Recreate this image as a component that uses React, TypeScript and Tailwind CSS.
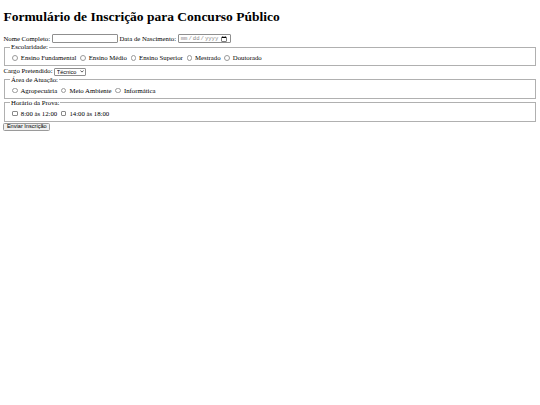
import { useState } from "react";

const escolaridades = ["Ensino Fundamental", "Ensino Médio", "Ensino Superior", "Mestrado", "Doutorado"];
const areas = ["Agropecuária", "Meio Ambiente", "Informática"];
const horarios = ["8:00 às 12:00", "14:00 às 18:00"];

export default function App() {
  const [cargo, setCargo] = useState("tecnico");

  return (
    <div className="min-h-screen bg-white px-[3.4px] text-[6.75px] leading-[1.15] text-black font-['Liberation_Serif','Times_New_Roman',serif]">
      <h1 className="pt-[9px] mb-[9px] text-[13.5px] font-bold leading-[1.15]">
        Formulário de Inscrição para Concurso Público
      </h1>

      <form onSubmit={(e) => e.preventDefault()}>
        <div className="leading-[9.5px]">
          <label htmlFor="nome">Nome Completo:</label>{" "}
          <input
            id="nome"
            type="text"
            className="w-[66px] h-[9px] align-middle border border-[#8f8f8f] rounded-[1px] bg-white px-[1px] text-[5.6px]"
          />{" "}
          <label htmlFor="nasc">Data de Nascimento:</label>{" "}
          <input
            id="nasc"
            type="date"
            className="w-[53px] h-[9px] align-middle border border-[#8f8f8f] rounded-[1px] bg-white px-[1px] text-[5.6px] text-[#8a8a8a] font-['Liberation_Mono',monospace]"
          />
        </div>

        <Group legend="Escolaridade:">
          {escolaridades.map((e) => (
            <Choice key={e} name="escolaridade" label={e} type="radio" />
          ))}
        </Group>

        <div className="leading-[9px]">
          <label htmlFor="cargo">Cargo Pretendido:</label>{" "}
          <span className="relative inline-block align-middle">
            <select
              id="cargo"
              value={cargo}
              onChange={(e) => setCargo(e.target.value)}
              className="appearance-none block h-[8px] pl-[1.5px] pr-[8px] leading-[6px] border border-[#8f8f8f] rounded-[1px] bg-white text-[5.6px] font-['Liberation_Sans',Arial,sans-serif]"
            >
              <option value="tecnico">Técnico</option>
              <option value="analista">Analista</option>
            </select>
            <svg
              viewBox="0 0 10 6"
              className="pointer-events-none absolute right-[1.5px] top-[2.6px] w-[4px] h-[2.6px]"
            >
              <path d="M1 1l4 4 4-4" fill="none" stroke="#222" strokeWidth="1.8" />
            </svg>
          </span>
        </div>

        <Group legend="Área de Atuação:">
          {areas.map((a) => (
            <Choice key={a} name="area" label={a} type="radio" />
          ))}
        </Group>

        <Group legend="Horário da Prova:">
          {horarios.map((h) => (
            <Choice key={h} name="horario" label={h} type="checkbox" />
          ))}
        </Group>

        <button
          type="submit"
          className="mt-[0.5px] h-[8px] px-[2.5px] leading-none border border-[#9a9a9a] rounded-[1.5px] bg-[#efefef] text-[5.6px] font-['Liberation_Sans',Arial,sans-serif]"
        >
          Enviar Inscrição
        </button>
      </form>
    </div>
  );
}

function Group({ legend, children }: { legend: string; children: React.ReactNode }) {
  return (
    <fieldset className="mx-[0.84px] border border-[#b0b0b0] px-[5px] pt-[2px] pb-[3.2px] leading-[9px]">
      <legend className="px-[0.84px] leading-[1.15]">{legend}</legend>
      {children}
    </fieldset>
  );
}

function Choice({ name, label, type }: { name: string; label: string; type: "radio" | "checkbox" }) {
  return (
    <>
      <input
        type={type}
        name={name}
        className={
          type === "radio"
            ? "appearance-none inline-block align-[-0.5px] w-[5.5px] h-[5.5px] ml-[2.1px] mr-[1.3px] rounded-full border border-[#9a9a9a] bg-white"
            : "appearance-none inline-block align-[-0.5px] w-[5.5px] h-[5.5px] ml-[2.1px] mr-[1.3px] rounded-[1px] border border-[#8a8a8a] bg-white"
        }
      />{" "}
      {label}{" "}
    </>
  );
}
